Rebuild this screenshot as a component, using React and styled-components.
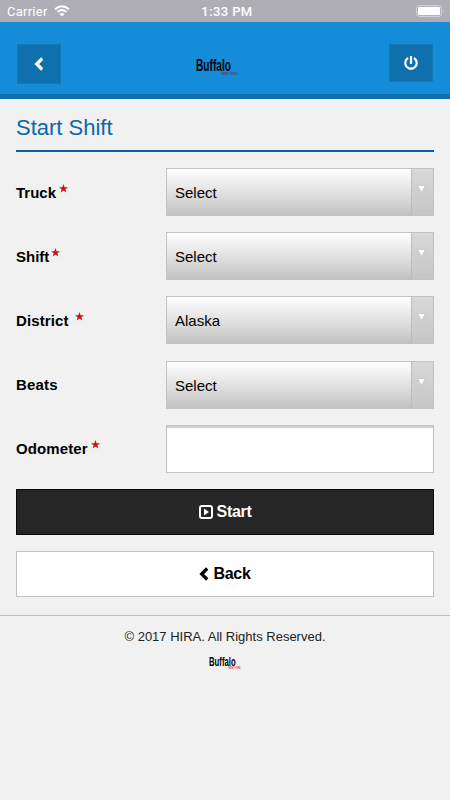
import React, { useState } from "react";
import styled, { createGlobalStyle } from "styled-components";
import { FaPowerOff } from "react-icons/fa";

const GlobalStyle = createGlobalStyle`
  * {
    box-sizing: border-box;
  }
  body {
    margin: 0;
    background: #f1f1f1;
    color: #000;
    font-family: "Liberation Sans", Arial, sans-serif;
  }
`;

const Screen = styled.div`
  width: 450px;
  height: 800px;
  overflow: hidden;
  background: #f1f1f1;
`;

const StatusBar = styled.div`
  display: grid;
  grid-template-columns: 1fr auto 1fr;
  align-items: center;
  height: 22px;
  padding: 0 5px 0 7px;
  background: #b0aeb5;
  color: #fff;
  font-family: Roboto, sans-serif;
  font-size: 13px;
`;

const Carrier = styled.div`
  display: flex;
  align-items: center;
  gap: 6px;
  letter-spacing: 0.25px;
`;

const Clock = styled.div`
  padding-left: 2px;
  font-weight: 500;
  letter-spacing: 0.4px;
`;

const Battery = styled.svg`
  justify-self: end;
`;

const Header = styled.header`
  display: flex;
  justify-content: space-between;
  align-items: flex-start;
  height: 77px;
  padding: 22px 17px 0;
  background: #158cd8;
  border-bottom: 5px solid #106fad;
`;

const HeaderButton = styled.button`
  display: flex;
  align-items: center;
  justify-content: center;
  width: 44px;
  height: ${(props) => props.$height}px;
  padding: 0;
  border: 1px solid #1478b8;
  background: #1070ae;
  color: #fff;
`;

const HeaderLogo = styled.div`
  padding: 12px 16px 0 0;
`;

const Content = styled.main`
  padding: 0 16px;
`;

const Title = styled.h1`
  height: 53px;
  margin: 0 0 16px;
  padding-top: 16px;
  border-bottom: 2px solid #0460a9;
  color: #0b67ad;
  font-size: 22px;
  font-weight: 400;
  line-height: 25px;
`;

const Row = styled.div`
  display: flex;
  align-items: center;
  height: 48px;
  margin-bottom: 16.2px;
`;

const Label = styled.label`
  display: flex;
  width: 150px;
  padding-top: 1px;
  font-size: 15px;
  font-weight: 700;
  line-height: 18px;
  letter-spacing: ${(props) => props.$spacing || 0}px;
`;

const Star = styled.svg`
  margin: 0 0 0 ${(props) => props.$gap}px;
`;

const SelectBox = styled.div`
  display: flex;
  align-items: stretch;
  width: 268px;
  height: 48px;
  border: 1px solid #c2c2c2;
  background: linear-gradient(#fff, #f7f7f7 15%, #c2c2c2);
`;

const SelectValue = styled.span`
  flex: 1;
  padding-left: 8px;
  font-size: 15px;
  line-height: 47px;
`;

const SelectArrow = styled.span`
  display: flex;
  justify-content: center;
  width: 22px;
  padding: 16px 2px 0 0;
  border-left: 1px solid #bdbdbd;
  background: linear-gradient(#d8d8d8, #c6c6c6);
`;

const TextInput = styled.input`
  width: 268px;
  height: 48px;
  padding: 0 8px;
  border: 1px solid #c2c2c2;
  border-radius: 0;
  outline: none;
  background: #fff;
  box-shadow: inset 0 2px 1px #d0d0d0;
  font: 15px "Liberation Sans", Arial, sans-serif;
`;

const Button = styled.button`
  display: flex;
  align-items: center;
  justify-content: center;
  gap: 4px;
  width: 100%;
  height: 46px;
  margin-bottom: 16px;
  padding: 1px 0 0;
  border: 1px solid ${(props) => (props.$dark ? "#080808" : "#c0c0c0")};
  background: ${(props) => (props.$dark ? "#262626" : "#fff")};
  color: ${(props) => (props.$dark ? "#fff" : "#000")};
  font: bold 16px "Liberation Sans", Arial, sans-serif;
  letter-spacing: -0.3px;
`;

const Footer = styled.footer`
  display: flex;
  flex-direction: column;
  align-items: center;
  margin-top: 18px;
  padding-top: 13px;
  border-top: 1px solid #bdbdbd;
`;

const Copyright = styled.p`
  margin: 0 0 10px;
  color: #222;
  font-size: 13px;
  line-height: 16px;
`;

const LogoSvg = styled.svg`
  display: block;
  overflow: visible;
`;

const fields = [
  { label: "Truck", value: "Select", gap: 3 },
  { label: "Shift", value: "Select", gap: 2 },
  { label: "District", value: "Alaska", gap: 7, spacing: 0.1 },
  { label: "Beats", value: "Select", spacing: 0.2 },
];

const Logo = ({ width, tagColor }) => (
  <LogoSvg width={width} height={(width * 22) / 42} viewBox="0 0 42 22">
    <text
      x="0"
      y="15"
      fontFamily="Liberation Sans Narrow, Liberation Sans, sans-serif"
      fontSize="16.5"
      fontWeight="700"
      textLength="35"
      lengthAdjust="spacingAndGlyphs"
    >
      Buffalo
    </text>
    <text
      x="25.5"
      y="18.6"
      fontFamily="Liberation Sans, sans-serif"
      fontSize="3.6"
      fontWeight="700"
      fill={tagColor}
      textLength="16"
      lengthAdjust="spacingAndGlyphs"
    >
      NEW YORK
    </text>
  </LogoSvg>
);

const ChevronLeft = () => (
  <svg width="10" height="14" viewBox="0 0 10 14">
    <path d="M8.2 1.5 2.7 7l5.5 5.5" fill="none" stroke="currentColor" strokeWidth="3.2" />
  </svg>
);

const PlayBox = () => (
  <svg width="14" height="14" viewBox="0 0 14 14">
    <rect
      x="1"
      y="1"
      width="12"
      height="12"
      rx="2"
      fill="none"
      stroke="currentColor"
      strokeWidth="2"
    />
    <path d="M5 3.5 10 7l-5 3.5z" fill="currentColor" />
  </svg>
);

const FieldLabel = ({ label, gap, spacing }) => (
  <Label $spacing={spacing}>
    {label}
    {gap && (
      <Star $gap={gap} width="9" height="9" viewBox="0 0 9 9">
        <path
          d="M4.5 0 5.6 3.3H9L6.3 5.3 7.3 8.6 4.5 6.6 1.7 8.6 2.7 5.3 0 3.3H3.4Z"
          fill="#d00b20"
        />
      </Star>
    )}
  </Label>
);

const App = () => {
  const [odometer, setOdometer] = useState("");

  return (
    <Screen>
      <GlobalStyle />
      <StatusBar>
        <Carrier>
          Carrier
          <svg width="16" height="12" viewBox="0 0 16 12" fill="none">
            <path d="M1 4.3Q8-1.8 15 4.3" stroke="#fff" strokeWidth="2" />
            <path d="M3.5 6.9Q8 3 12.5 6.9" stroke="#fff" strokeWidth="1.8" />
            <path d="M5.5 9Q8 6.9 10.5 9L8 11.5Z" fill="#fff" />
          </svg>
        </Carrier>
        <Clock>1:33 PM</Clock>
        <Battery width="29" height="12" viewBox="0 0 29 12">
          <rect
            x="0.6"
            y="0.6"
            width="24.8"
            height="10.8"
            rx="2.6"
            fill="none"
            stroke="#d6d5d9"
          />
          <rect x="2" y="2" width="22" height="8" rx="1.2" fill="#fff" />
          <path d="M27 4Q28.6 6 27 8Z" fill="#d6d5d9" />
        </Battery>
      </StatusBar>
      <Header>
        <HeaderButton $height={40} aria-label="Back">
          <ChevronLeft />
        </HeaderButton>
        <HeaderLogo>
          <Logo width={42} tagColor="#573c69" />
        </HeaderLogo>
        <HeaderButton $height={38} aria-label="Log out">
          <FaPowerOff size={14} />
        </HeaderButton>
      </Header>
      <Content>
        <Title>Start Shift</Title>
        {fields.map((field) => (
          <Row key={field.label}>
            <FieldLabel {...field} />
            <SelectBox>
              <SelectValue>{field.value}</SelectValue>
              <SelectArrow>
                <svg width="9" height="8" viewBox="0 0 9 8">
                  <path d="M.5.5h8l-4 7z" fill="#fff" stroke="#aaa" strokeWidth="0.5" />
                </svg>
              </SelectArrow>
            </SelectBox>
          </Row>
        ))}
        <Row>
          <FieldLabel label="Odometer" gap={3} spacing={0.1} />
          <TextInput
            value={odometer}
            onChange={(e) => setOdometer(e.target.value)}
          />
        </Row>
        <Button $dark>
          <PlayBox />
          Start
        </Button>
        <Button>
          <ChevronLeft />
          Back
        </Button>
      </Content>
      <Footer>
        <Copyright>© 2017 HIRA. All Rights Reserved.</Copyright>
        <Logo width={32} tagColor="#d64b58" />
      </Footer>
    </Screen>
  );
};

export default App;
